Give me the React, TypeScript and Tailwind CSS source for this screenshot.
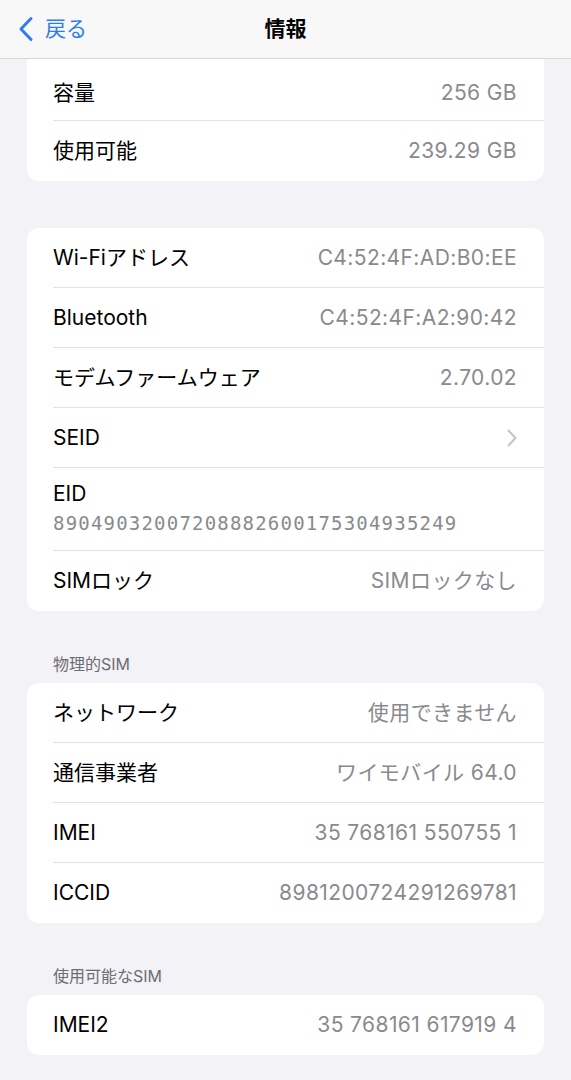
import React from "react";

const font = { fontFamily: '"Inter", "Noto Sans CJK JP", sans-serif' };

function Row({ label, value, chevron, last }: { label: string; value?: string; chevron?: boolean; last?: boolean }) {
  return (
    <div className="pl-[26px]">
      <div className={`flex h-[60px] items-center justify-between pr-[27px] ${last ? "" : "border-b border-[#e2e2e6]"}`}>
        <span className="text-[21px] text-black">{label}</span>
        {value && <span className="text-[21px] tracking-[0.4px] text-[#8a8a8e]">{value}</span>}
        {chevron && (
          <svg width="12" height="20" viewBox="0 0 12 20" className="mr-[-1px]">
            <path d="M2.5 2.5 L9.5 10 L2.5 17.5" fill="none" stroke="#c4c4c7" strokeWidth="2" strokeLinecap="round" strokeLinejoin="round" />
          </svg>
        )}
      </div>
    </div>
  );
}

function Card({ children, className = "" }: { children: React.ReactNode; className?: string }) {
  return <div className={`mx-[27px] bg-white ${className}`}>{children}</div>;
}

function Header({ text }: { text: string }) {
  return <div className="px-[53px] pb-[9px] pt-[43px] text-[16px] leading-[20px] text-[#6d6d72]">{text}</div>;
}

export default function App() {
  return (
    <div className="min-h-[1080px] w-[571px] overflow-hidden bg-[#f2f2f7]" style={font}>
      <div className="relative flex h-[59px] items-center border-b border-[#d6d6d9] bg-[#f8f8f8]">
        <div className="flex items-center pl-[18px] text-[#2f7cf0]">
          <svg width="16" height="26" viewBox="0 0 16 26">
            <path d="M13 2.5 L3 13 L13 23.5" fill="none" stroke="#2f7cf0" strokeWidth="3" strokeLinecap="round" strokeLinejoin="round" />
          </svg>
          <span className="ml-[11px] text-[21px]">戻る</span>
        </div>
        <div className="absolute inset-x-0 top-0 flex h-[58px] items-center justify-center text-[21px] font-bold text-black">情報</div>
      </div>

      <Card className="rounded-b-[12px]">
        <div className="pl-[26px]">
          <div className="flex h-[62px] items-center justify-between border-b border-[#e2e2e6] pr-[27px] pt-[6px]">
            <span className="text-[21px] text-black">容量</span>
            <span className="text-[21px] tracking-[0.4px] text-[#8a8a8e]">256 GB</span>
          </div>
        </div>
        <Row label="使用可能" value="239.29 GB" last />
      </Card>

      <div className="h-[47px]" />

      <Card className="rounded-[12px]">
        <Row label="Wi-Fiアドレス" value="C4:52:4F:AD:B0:EE" />
        <Row label="Bluetooth" value="C4:52:4F:A2:90:42" />
        <Row label="モデムファームウェア" value="2.70.02" />
        <Row label="SEID" chevron />
        <div className="pl-[26px]">
          <div className="flex h-[83px] flex-col justify-center border-b border-[#e2e2e6]">
            <span className="text-[21px] leading-[28px] text-black">EID</span>
            <span
              className="text-[19px] leading-[30px] tracking-[1.2px] text-[#8a8a8e]"
              style={{ fontFamily: '"DejaVu Sans Mono", monospace' }}
            >
              89049032007208882600175304935249
            </span>
          </div>
        </div>
        <Row label="SIMロック" value="SIMロックなし" last />
      </Card>

      <Header text="物理的SIM" />
      <Card className="rounded-[12px]">
        <Row label="ネットワーク" value="使用できません" />
        <Row label="通信事業者" value="ワイモバイル 64.0" />
        <Row label="IMEI" value="35 768161 550755 1" />
        <Row label="ICCID" value="8981200724291269781" last />
      </Card>

      <Header text="使用可能なSIM" />
      <Card className="rounded-[12px]">
        <Row label="IMEI2" value="35 768161 617919 4" last />
      </Card>
    </div>
  );
}
